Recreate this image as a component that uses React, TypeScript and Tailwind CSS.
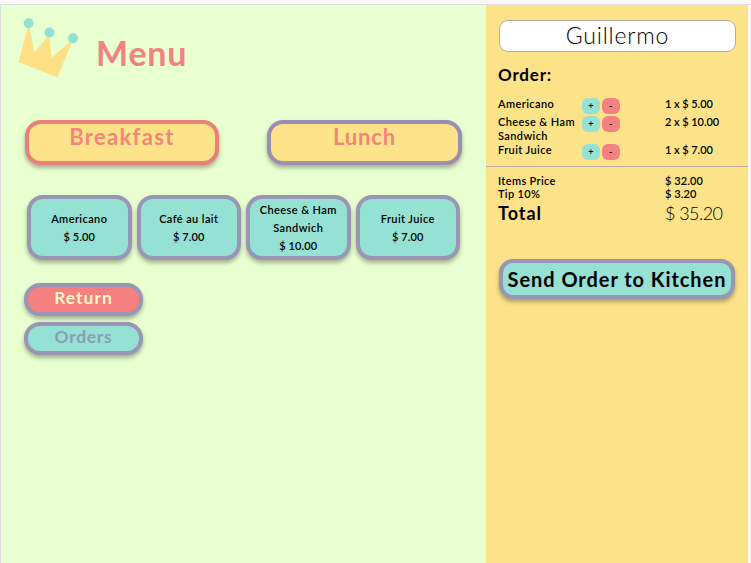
import React from 'react';

type Product = { lines: string[]; price: string };

const products: Product[] = [
  { lines: ['Americano'], price: '$ 5.00' },
  { lines: ['Café au lait'], price: '$ 7.00' },
  { lines: ['Cheese & Ham', 'Sandwich'], price: '$ 10.00' },
  { lines: ['Fruit Juice'], price: '$ 7.00' },
];

const orderLines = [
  { lines: ['Americano'], amount: '1 x $ 5.00', height: 'h-[18px]' },
  { lines: ['Cheese & Ham', 'Sandwich'], amount: '2 x $ 10.00', height: 'h-[28px]' },
  { lines: ['Fruit Juice'], amount: '1 x $ 7.00', height: 'h-[22px]' },
];

function Crown() {
  return (
    <svg width="64" height="62" viewBox="16 17 64 62" className="ml-[15px] mt-3 shrink-0">
      <path d="M28.7 24 L18.5 62 L57.5 77.5 L73 39 L51.5 58 L49.5 34.5 L34.5 52.5 Z" fill="#fddf86" />
      <circle cx="28.7" cy="23.3" r="5" fill="#93e0d3" />
      <circle cx="49.5" cy="32.5" r="5" fill="#93e0d3" />
      <circle cx="73" cy="38.3" r="5" fill="#93e0d3" />
    </svg>
  );
}

export default function App() {
  return (
    <div className="flex h-[563px] w-[751px] flex-col overflow-hidden bg-[#f8f8f8] font-['Lato',sans-serif] text-black">
      <div className="h-[5px] shrink-0 border-b border-[#dedede]" />
      <div className="flex flex-1">
        <main className="w-[486px] border-l border-[#dcdfd6] bg-[#e8ffcf]">
          <header className="flex h-[115px]">
            <Crown />
            <h1 className="ml-4 mt-[27px] text-[34px] font-bold leading-[42px] tracking-[0.8px] text-[#f38181]">Menu</h1>
          </header>
          <nav className="ml-6 flex gap-12">
            <button className="h-[45px] w-[194px] rounded-[16px] border-4 border-[#eb8078] bg-[#fce38a] pb-3 text-[22px] font-bold leading-6 tracking-[1.3px] text-[#f08679] shadow-[0_3px_4px_rgba(0,0,0,0.3)]">Breakfast</button>
            <button className="h-[45px] w-[195px] rounded-[16px] border-4 border-[#9b8eb0] bg-[#fce38a] pb-3 text-[22px] font-bold leading-6 tracking-[0.8px] text-[#f08679] shadow-[0_3px_4px_rgba(0,0,0,0.3)]">Lunch</button>
          </nav>
          <section className="ml-[26px] mt-[30px] flex gap-[5px]">
            {products.map((p, i) => (
              <button key={i} className="flex h-[65px] w-[104.5px] flex-col items-center justify-center rounded-[16px] border-4 border-[#9995b4] bg-[#95e1d3] text-[11px] font-semibold leading-[18px] tracking-[0.4px] shadow-[0_3px_4px_rgba(0,0,0,0.3)]">
                {p.lines.map((l) => <span key={l} className="whitespace-nowrap">{l}</span>)}
                <span className="tracking-[0.1px]">{p.price}</span>
              </button>
            ))}
          </section>
          <section className="ml-[23px] mt-[23px] flex flex-col gap-[6px]">
            <button className="h-[33px] w-[119px] rounded-[16px] border-4 border-[#9995b4] bg-[#f67f80] pb-1 text-[17.5px] font-bold leading-5 tracking-[1px] text-[#fff7c4] shadow-[0_3px_4px_rgba(0,0,0,0.3)]">Return</button>
            <button className="h-[33px] w-[119px] rounded-[16px] border-4 border-[#9995b4] bg-[#95e1d3] pb-1 text-[17.5px] font-bold leading-5 tracking-[0.7px] text-[#8d9bbb] shadow-[0_3px_4px_rgba(0,0,0,0.3)]">Orders</button>
          </section>
        </main>
        <aside className="w-[262px] bg-[#fce38a]">
          <div className="ml-[13px] mt-[15px] flex h-8 w-[237px] items-center justify-center rounded-[9px] border border-[#b5aaa5] bg-white pb-[2px] text-[23px] font-light leading-[29px] tracking-[0.8px]">Guillermo</div>
          <h2 className="ml-3 mt-[11px] h-[35px] text-[17px] font-bold leading-6 tracking-[0.8px]">Order:</h2>
          <div>
            {orderLines.map((o) => (
              <div key={o.lines[0]} className={`flex pl-3 text-[11px] font-semibold leading-[14px] tracking-[0.4px] ${o.height}`}>
                <div className="-mt-px w-[84px] whitespace-nowrap">
                  {o.lines.map((l) => <div key={l}>{l}</div>)}
                </div>
                <div className="flex w-[83px] gap-[2px] text-[9px]">
                  <button className="h-4 w-[18px] rounded-[6px] bg-[#95e1d3]">+</button>
                  <button className="h-4 w-[18px] rounded-[6px] bg-[#f38181]">-</button>
                </div>
                <div className="-mt-px tracking-[-0.05px]">{o.amount}</div>
              </div>
            ))}
          </div>
          <hr className="border-[#beaaa2]" />
          <div className="mt-[7px] grid grid-cols-[167px_1fr] pl-3 text-[11px] font-semibold leading-[13px] tracking-[0.35px]">
            <span>Items Price</span><span className="tracking-[0.1px]">$ 32.00</span>
            <span>Tip 10%</span><span className="tracking-[0.1px]">$ 3.20</span>
            <span className="text-[18px] font-bold leading-[26px] tracking-[1px]">Total</span><span className="text-[18px] font-light leading-[26px] tracking-[-0.55px]">$ 35.20</span>
          </div>
          <button className="ml-[13px] mt-[33px] h-10 w-[236px] whitespace-nowrap rounded-[14px] border-4 border-[#9995b4] bg-[#95e1d3] text-[20px] font-bold leading-8 tracking-[0.95px] shadow-[0_3px_4px_rgba(0,0,0,0.3)]"><span className="-mx-2">Send Order to Kitchen</span></button>
        </aside>
      </div>
    </div>
  );
}
